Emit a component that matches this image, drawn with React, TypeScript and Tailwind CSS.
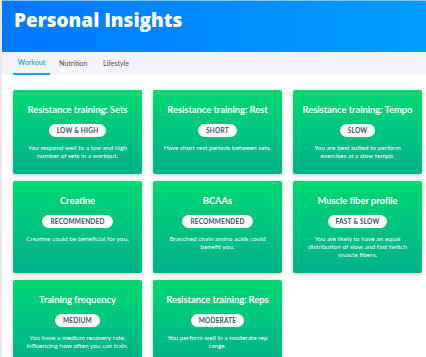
const cards = [
  { title: 'Resistance training: Sets', tag: 'LOW & HIGH', text: 'You respond well to a low and high number of sets in a workout.' },
  { title: 'Resistance training: Rest', tag: 'SHORT', text: 'Have short rest periods between sets.' },
  { title: 'Resistance training: Tempo', tag: 'SLOW', text: 'You are best suited to perform exercises at a slow tempo.' },
  { title: 'Creatine', tag: 'RECOMMENDED', text: 'Creatine could be beneficial for you.' },
  { title: 'BCAAs', tag: 'RECOMMENDED', text: 'Branched chain amino acids could benefit you.' },
  { title: 'Muscle fiber profile', tag: 'FAST & SLOW', text: 'You are likely to have an equal distribution of slow and fast twitch muscle fibers.' },
  { title: 'Training frequency', tag: 'MEDIUM', text: 'You have a medium recovery rate, influencing how often you can train.' },
  { title: 'Resistance training: Reps', tag: 'MODERATE', text: 'You perform well in a moderate rep range.' },
]

function InsightCard({ title, tag, text }: { title: string; tag: string; text: string }) {
  return (
    <div className="rounded-[2px] bg-gradient-to-b from-[#00d870] to-[#00b08a] shadow-[0_1px_4px_rgba(0,0,0,0.25)] pt-[14px] pb-[14px] flex flex-col items-center text-center text-white">
      <h3 className="text-[9.5px] leading-[12px] font-bold whitespace-nowrap tracking-[-0.1px]">{title}</h3>
      <span className="mt-[8px] h-[13px] px-[8px] rounded-full bg-white text-[#3e4e6a] text-[6.5px] font-bold leading-[13px] tracking-[0.2px]">
        {tag}
      </span>
      <p className="mt-[7px] w-[108px] text-[6.5px] leading-[8px]">{text}</p>
    </div>
  )
}

export default function App() {
  return (
    <div className="w-[426px] h-[357px] overflow-hidden bg-white border-l-2 border-[#e8e9ec]" style={{ fontFamily: 'Lato, "Open Sans", sans-serif' }}>
      <div className="h-[52px] border-t border-[#8fc3ff] bg-gradient-to-r from-[#0078ff] to-[#009cff] pl-[12px] pt-[6px]">
        <h1 className="text-white text-[19px] font-extrabold leading-[26px]" style={{ fontFamily: '"Open Sans", Lato, sans-serif' }}>
          Personal Insights
        </h1>
      </div>
      <div className="h-[23px] bg-[#f3f4f7] flex pl-[11px] text-[7px]">
        <div className="w-[37px] flex items-center justify-center border-b-2 border-[#0aaeef] text-[#1ba2e6] font-semibold">
          Workout
        </div>
        <div className="ml-[9px] flex items-center text-[#4b4b4b]">Nutrition</div>
        <div className="ml-[16px] flex items-center text-[#4b4b4b]">Lifestyle</div>
      </div>
      <div className="grid grid-cols-[129px_129px_129px] gap-x-[11px] gap-y-[7px] pl-[11px] pt-[15px]">
        {cards.map((c) => (
          <InsightCard key={c.title} {...c} />
        ))}
      </div>
    </div>
  )
}
